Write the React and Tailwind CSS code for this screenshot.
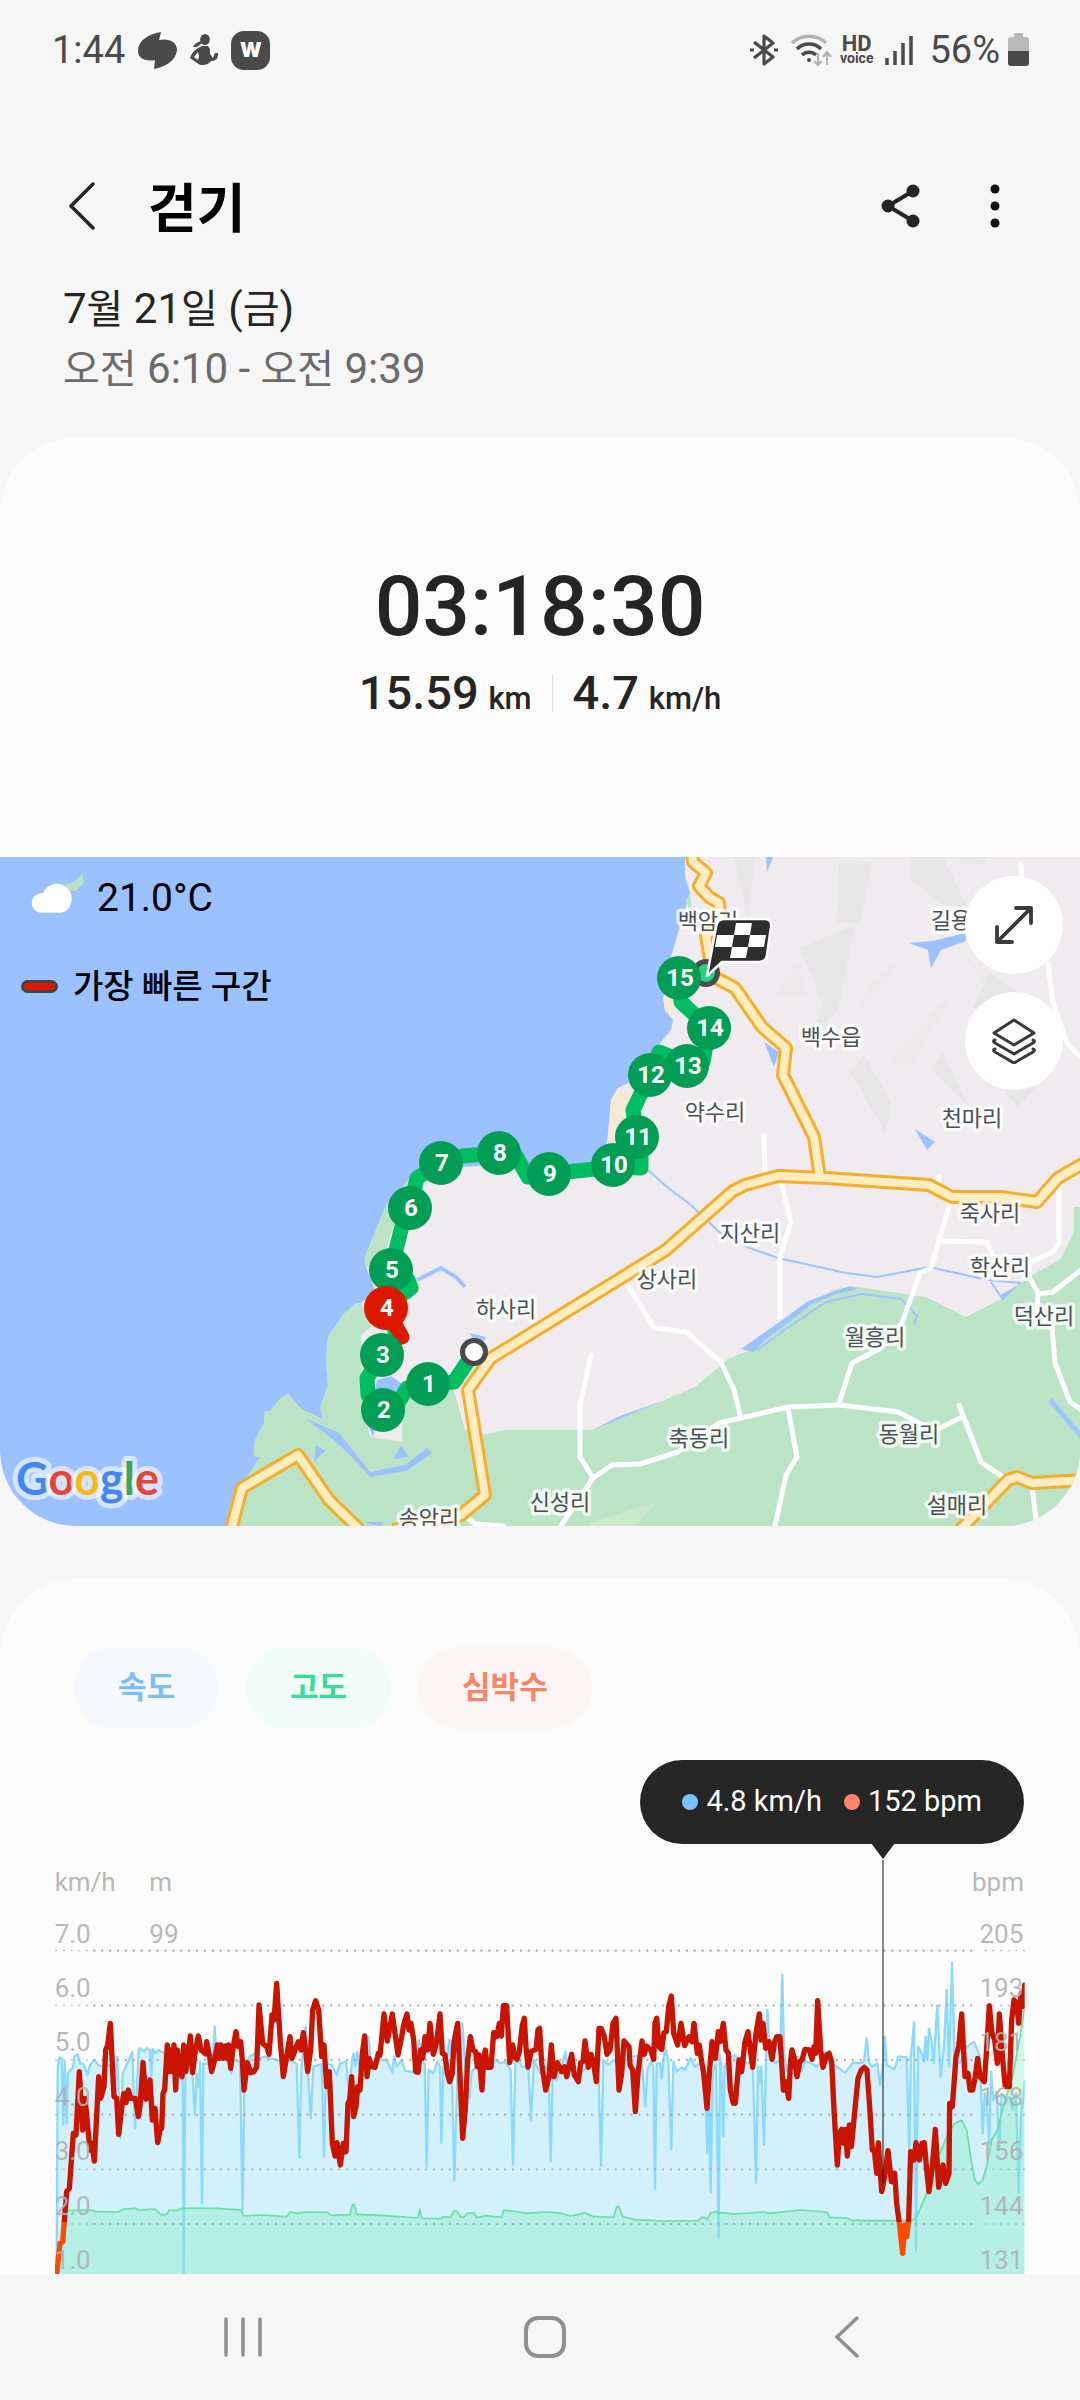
import React from "react";

const LAND =
  "685,857 685,877 690,893 678,933 671,957 668,985 663,997 665,1010 673,1020 671,1030 654,1050 640,1067 628,1083 618,1088 611,1100 607,1143 592,1163 549,1174 528,1183 516,1163 463,1167 427,1180 410,1178 387,1203 365,1257 366,1267 375,1290 361,1303 355,1304 343,1315 328,1337 326,1363 328,1385 320,1408 324,1420 300,1408 288,1394 280,1399 270,1411 265,1411 264,1423 255,1440 254,1456 260,1457 247,1477 238,1485 227,1526 1080,1526 1080,857";

const FORESTS = [
  "361,1303 355,1304 343,1315 328,1337 326,1363 328,1385 320,1408 324,1420 300,1408 288,1394 280,1399 270,1411 265,1411 264,1423 255,1440 254,1456 260,1457 247,1477 238,1485 227,1526 1080,1526 1080,1207 1074,1207 1074,1232 1060,1260 1032,1275 1003,1298 966,1317 926,1297 857,1287 836,1289 808,1303 781,1323 755,1348 728,1359 719,1367 695,1387 660,1402 592,1430 506,1430 482,1435 465,1430 452,1384 425,1370 403,1400 402,1442 370,1437 366,1420 361,1385 361,1335 372,1326",
  "410,1178 387,1203 365,1257 366,1267 380,1267 394,1225",
  "82,874 84,883 75,891 65,890 60,886 74,882",
  "690,893 692,910 689,912 686,900",
];

const HILLS = [
  "734,857 755,857 748,917",
  "839,863 872,862 860,923 836,923",
  "910,857 943,857 967,907 943,905 910,880",
  "950,857 988,857 982,865",
  "855,925 838,1010 815,1032 822,1003 800,948",
  "864,1054 891,1103 886,1133 850,1072",
  "943,1052 969,1107 931,1068",
  "989,973 1019,992 972,1010",
  "1003,1090 1036,1087 1018,1107",
];

const LIGHT_HILLS = [
  "955,988 915,1063 888,1063",
  "798,962 808,997 772,998",
  "910,953 855,1015 870,983",
  "965,955 989,973 982,985",
];

const PONDS = [
  "909,943 933,941 965,933 966,941 941,950 931,968 928,950",
  "915,1129 935,1142 927,1150",
  "764,1042 779,1052 774,1067",
  "766,857 773,857 767,872",
  "469,1333 486,1337 480,1347",
  "377,1380 391,1376 401,1383 397,1393 374,1397",
  "368,1425 376,1425 373,1437",
  "305,1418 339,1433 370,1472 405,1465 427,1448 432,1453 406,1471 370,1477 348,1453 330,1437",
  "316,1445 325,1451 314,1462",
  "401,1445 409,1457 394,1459",
  "363,1522 384,1522 380,1526",
  "741,1349 781,1321 808,1301 850,1286 858,1289 836,1294 812,1304 785,1325 764,1341 754,1352",
  "592,1430 620,1416 662,1401 622,1418",
  "1003,1300 1001,1295 1021,1283",
];

const STREAMS = [
  "648,1170 667,1187 691,1205 719,1232 747,1247 778,1258 846,1273 877,1277 929,1267 988,1280 1021,1283",
  "991,1282 1003,1300",
  "757,1350 790,1326 826,1302 862,1294 901,1299 917,1316 914,1325",
];

const PRIMARY_ROADS = [
  "692,852 693,862 706,873 699,886 709,897 719,903 721,925 706,935 712,972 716,978 735,988 762,1027 786,1048 783,1075 814,1137 820,1178",
  "393,1530 461,1515 485,1495 468,1390 491,1358 540,1328 626,1275 666,1250 733,1191 745,1185 778,1176 826,1178 929,1185 952,1197 1001,1197 1037,1202 1058,1178 1084,1163",
  "231,1530 242,1488 298,1455 329,1500 360,1530",
  "960,1530 1008,1480 1017,1477 1032,1483 1084,1480",
];

const ROADS = [
  "764,1135 765,1175",
  "781,1180 783,1190 791,1222 780,1257 780,1317",
  "626,1282 654,1328 686,1332 721,1362 734,1390 741,1418",
  "561,1526 593,1478 580,1457 580,1405 591,1355",
  "593,1478 612,1465 640,1464 678,1452 719,1423 741,1418 788,1407 840,1405 898,1412 919,1423 936,1430 960,1418",
  "775,1526 786,1475 797,1457 788,1408",
  "839,1403 852,1363 881,1348 902,1323 920,1273 931,1268 950,1203",
  "939,1241 986,1242 994,1257",
  "1059,1188 1059,1242 1053,1252 1029,1263 1029,1277 1038,1293 1037,1310 1052,1328 1055,1363 1070,1402 1082,1410",
  "1038,1294 1053,1292 1082,1269",
  "959,1405 981,1462 1003,1477",
  "1032,1485 1036,1520",
  "1048,963 1053,1003 1067,1043 1082,1059",
  "1021,865 1022,877",
  "939,1177 938,1188",
  "948,1188 956,1193",
  "468,1518 475,1524 504,1526",
  "329,1498 338,1502",
];

const PLACES = [
  ["백암리", 708, 921],
  ["길용리", 961, 920],
  ["백수읍", 831, 1037],
  ["약수리", 715, 1112],
  ["천마리", 972, 1118],
  ["죽사리", 990, 1213],
  ["지산리", 750, 1233],
  ["학산리", 1000, 1267],
  ["상사리", 667, 1279],
  ["하사리", 506, 1309],
  ["덕산리", 1044, 1316],
  ["월흥리", 875, 1337],
  ["축동리", 699, 1438],
  ["동월리", 909, 1434],
  ["신성리", 560, 1502],
  ["설매리", 957, 1505],
  ["송암리", 429, 1518],
];

const ROUTE =
  "474,1352 454,1382 428,1384 407,1388 400,1400 383,1410 368,1395 367,1378 382,1355 398,1338 386,1308 395,1300 411,1288 408,1280 391,1270 403,1222 410,1208 417,1178 441,1163 462,1156 499,1153 516,1156 528,1177 549,1174 613,1167 641,1168 641,1152 637,1137 633,1110 650,1075 659,1052 669,1056 687,1066 703,1062 709,1028 681,1002 679,978 705,973";

const KM_MARKERS = [
  [1, 428, 1384],
  [2, 383, 1410],
  [3, 382, 1355],
  [5, 391, 1270],
  [4, 386, 1308],
  [6, 410, 1208],
  [7, 441, 1163],
  [8, 499, 1153],
  [9, 549, 1174],
  [10, 613, 1165],
  [11, 637, 1137],
  [13, 687, 1066],
  [12, 650, 1075],
  [14, 709, 1028],
  [15, 679, 978],
];

// chart units: three per pixel on a 1080px wide screen
const HEART =
  "170,1242 180,1150 188,1145 200,995 208,985 220,820 228,825 238,635 248,810 255,715 270,870 275,850 283,903 296,650 302,715 312,680 317,570 323,555 331,490 342,710 350,715 356,823 368,720 372,700 378,728 385,690 392,715 406,715 415,770 420,740 429,608 438,718 450,660 457,780 465,745 473,848 480,810 485,805 489,700 494,690 502,555 508,635 513,570 516,635 522,555 527,690 532,570 540,640 546,650 551,555 557,635 565,580 571,528 578,638 586,570 595,528 603,570 617,582 620,545 628,585 635,635 644,600 652,555 658,595 663,555 670,595 676,558 682,595 686,555 692,625 700,560 708,515 715,560 722,545 727,600 732,690 742,608 752,638 761,635 770,622 777,435 788,550 800,560 807,583 816,465 822,480 830,370 841,545 850,650 860,590 870,530 876,595 885,570 895,545 903,570 910,518 917,570 923,635 932,570 938,450 947,422 956,450 965,590 972,555 980,680 988,635 997,850 1005,888 1011,848 1021,915 1030,850 1038,875 1044,730 1049,720 1055,650 1061,770 1068,740 1073,680 1080,690 1087,580 1094,528 1101,650 1107,595 1115,620 1125,622 1135,580 " +
  "1140,585 1152,462 1162,543 1177,462 1194,585 1205,530 1212,490 1221,462 1227,510 1233,490 1241,540 1247,635 1254,637 1262,570 1268,595 1275,530 1283,570 1290,490 1300,583 1310,545 1320,462 1327,580 1335,585 1342,640 1349,665 1357,640 1362,545 1373,490 1380,650 1388,835 1396,745 1403,600 1411,530 1419,570 1427,575 1432,620 1437,585 1446,690 1451,595 1456,570 1462,622 1473,622 1481,518 1490,530 1498,490 1504,528 1510,437 1520,437 1529,608 1538,555 1544,590 1551,598 1558,575 1567,495 1573,475 1578,560 1584,622 1593,575 1608,568 1614,510 1619,505 1625,610 1637,690 1647,650 1654,555 1662,650 1672,608 1685,635 1693,620 1700,650 1710,605 1715,583 1723,645 1735,665 1742,608 1749,605 1755,543 1765,622 1773,583 1781,610 1789,665 1797,505 1804,505 1813,530 1821,583 1830,570 1839,490 1848,475 1857,690 1865,640 1872,543 1887,560 1890,615 1898,630 1906,755 1914,640 1926,543 1933,583 1939,558 1952,570 1961,598 1965,490 1970,475 1977,560 1985,568 1992,518 1999,515 2006,440 2014,408 2021,520 2033,555 2043,490 2054,557 2067,530 2076,545 2082,490 2092,580 2098,555 2105,605 2111,640 2121,745 2128,640 2136,545 2146,595 2155,515 " +
  "2160,545 2170,490 2178,570 2185,580 2191,690 2200,730 2206,730 2217,600 2225,635 2235,545 2244,515 2258,622 2268,520 2278,462 2283,540 2289,490 2297,565 2307,545 2316,598 2324,545 2330,530 2340,530 2350,690 2357,665 2366,715 2372,600 2376,570 2383,595 2391,650 2400,605 2406,600 2415,568 2428,570 2436,598 2442,560 2447,580 2453,422 2462,570 2469,622 2480,585 2487,580 2495,605 2502,750 2512,915 2518,820 2525,808 2531,850 2536,808 2542,888 2548,795 2554,860 2560,800 2567,725 2574,655 2584,630 2593,622 2601,630 2609,740 2617,870 2623,870 2630,940 2635,848 2645,995 2652,960 2664,872 2674,965 2684,940 2690,1030 2698,1090 2708,1180 2714,1095 2720,1130 2726,1080 2732,875 2742,900 2748,848 2758,900 2766,850 2773,848 2780,930 2787,995 2797,920 2806,808 2816,982 2829,915 2837,970 2847,940 2849,730 2857,740 2868,590 2876,560 2885,462 2895,650 2904,640 2910,690 2918,690 2925,655 2933,595 2940,650 2953,665 2959,580 2968,437 2976,520 2984,540 2992,610 2998,462 3008,600 3016,680 3028,680 3035,480 3042,420 3050,430 3056,490 3063,400 3068,440 3074,375";

const SPEED =
  "170,1242 173,620 178,592 185,595 190,795 194,605 200,790 204,640 220,620 223,590 233,583 240,610 250,612 262,645 270,615 283,600 295,615 312,620 332,615 342,700 352,590 361,835 368,640 382,610 397,577 405,805 416,570 420,565 432,575 440,565 450,570 454,650 458,567 466,580 475,570 495,580 515,620 540,600 548,620 551,1250 556,640 575,610 585,765 590,640 596,680 600,605 606,1030 610,610 625,612 638,600 644,500 650,600 675,580 694,640 700,600 720,605 728,1050 734,610 750,590 765,580 775,595 795,590 820,597 840,603 870,600 890,612 898,893 904,630 917,500 923,620 932,775 940,620 965,612 972,888 978,610 995,615 1010,645 1020,610 1038,605 1048,700 1056,600 1061,580 1065,620 1072,575 1080,640 1095,600 1105,530 1112,600 1125,610 1140,590 " +
  "1145,600 1160,600 1177,637 1182,590 1190,620 1205,600 1215,632 1240,637 1256,540 1262,560 1268,605 1274,610 1280,920 1286,630 1300,640 1312,605 1320,620 1324,848 1330,620 1340,600 1348,540 1355,610 1363,960 1372,640 1380,610 1387,490 1396,620 1408,715 1415,635 1430,620 1450,605 1475,620 1488,600 1500,610 1515,605 1532,630 1539,915 1546,610 1558,600 1565,620 1585,620 1593,780 1602,600 1620,640 1635,620 1646,630 1652,905 1658,640 1670,660 1685,620 1696,575 1703,620 1720,640 1740,640 1765,620 1795,610 1803,918 1810,600 1825,615 1840,600 1865,610 1890,590 1915,588 1925,600 1936,740 1942,630 1955,600 1960,620 1965,987 1970,610 1980,610 1985,655 1995,560 2005,605 2014,868 2020,605 2030,635 2045,622 2055,630 2072,595 2085,620 2100,610 2115,620 2122,880 2127,640 2132,997 2138,640 2148,610 2156,1135 " +
  "2160,585 2164,620 2170,830 2174,620 2182,605 2202,585 2220,600 2245,610 2258,600 2268,968 2274,620 2278,670 2284,620 2292,855 2298,600 2302,450 2310,590 2325,610 2340,600 2347,345 2352,580 2365,650 2375,600 2395,590 2405,635 2415,605 2435,610 2450,620 2470,600 2510,620 2535,638 2560,607 2580,610 2592,605 2600,535 2608,610 2615,620 2632,610 2640,675 2648,620 2654,530 2660,615 2683,628 2695,590 2720,592 2728,880 2732,600 2742,487 2748,1172 2754,560 2765,580 2772,605 2777,530 2782,600 2787,507 2795,545 2801,610 2812,437 2822,650 2832,560 2840,390 2847,620 2856,308 2864,600 2880,610 2900,560 2922,545 2940,590 2948,820 2954,700 2960,720 2968,850 2973,635 2980,720 2990,695 2998,870 3005,700 3020,720 3030,710 3038,750 3048,700 3056,1000 3063,760 3070,720 3074,660";

const ALTITUDE =
  "170,1242 195,1052 275,1050 285,1055 355,1056 370,1048 405,1045 415,1050 465,1047 482,1064 500,1064 507,1050 530,1052 545,1045 600,1044 650,1045 723,1050 730,1068 785,1065 860,1070 870,1056 895,1060 920,1056 982,1057 995,1066 1050,1064 1057,1034 1063,1034 1070,1063 1140,1066 1200,1070 1253,1074 1260,1047 1265,1075 1323,1076 1330,1070 1352,1072 1362,1052 1370,1053 1382,1070 1392,1072 1402,1060 1423,1059 1430,1073 1458,1067 1505,1072 1511,1050 1555,1056 1575,1060 1640,1056 1685,1060 1710,1068 1735,1064 1755,1058 1780,1070 1840,1072 1850,1040 1857,1040 1868,1070 1905,1079 1990,1083 2095,1082 2105,1072 2115,1072 2121,1080 2130,1060 2145,1055 2160,1058 2205,1062 2290,1056 2310,1060 2400,1050 2480,1056 2490,1072 2540,1074 2558,1082 2575,1080 2580,1082 2735,1082 2750,1070 2780,1000 2815,890 2845,820 2865,790 2885,780 2900,810 2915,910 2925,960 2935,973 2948,960 2960,920 2975,840 2992,810 3010,740 3040,640 3060,530 3074,440";

const SCALE = [
  { speed: "7.0", bpm: "205", y: 248 },
  { speed: "6.0", bpm: "193", y: 410 },
  { speed: "5.0", bpm: "181", y: 573 },
  { speed: "4.0", bpm: "168", y: 737 },
  { speed: "3.0", bpm: "156", y: 900 },
  { speed: "2.0", bpm: "144", y: 1065 },
  { speed: "1.0", bpm: "131", y: 1227 },
];

function StatusBar() {
  return (
    <div className="flex h-[100px] items-center justify-between pl-[52px] pr-[51px] text-[38px] text-[#4a4a4a]">
      <div className="flex items-center gap-[13px]">
        <span className="leading-none">1:44</span>
        <svg className="h-[37px] w-[39px]" viewBox="0 0 39 37" fill="#4a4a4a">
          <path d="M23 0 21 8C31 6 39 10 39 18C38 28 28 35 16 37L17 28C7 30 0 26 0 19C0 9 10 2 23 0Z" />
        </svg>
        <svg className="h-8 w-7" viewBox="0 0 28 32" fill="#4a4a4a">
          <ellipse cx="15" cy="5.500" rx="4.800" ry="5.500" />
          <path d="M11 7C8 8 4 10 3 13L7 13 12 9ZM12 12H18L20 15 20 20 23 24 25 19 28 19C28 25 26 27 21 27C18 32 10 32 7 29L0 24C1 20 6 14 12 12ZM8 18 4 23 8 26 9 22Z" />
        </svg>
        <span className="flex h-[39px] w-[39px] items-center justify-center rounded-[13px] bg-[#4a4a4a] font-['Inter'] text-[20px] font-black leading-none text-white">
          W
        </span>
      </div>
      <div className="flex items-center">
        <svg className="h-[34px] w-7" viewBox="0 0 28 34" fill="none" stroke="#4a4a4a" strokeWidth="3.200">
          <path d="M4 9 23 24 14 31V3L23 10 4 25" strokeLinejoin="round" />
          <path d="M0 17H4M24 17H28" />
        </svg>
        <svg className="ml-[13px] h-[34px] w-[42px]" viewBox="0 0 42 34" fill="none" strokeWidth="3.500">
          <path d="M1 10A25 25 0 0 1 35 10" stroke="#b3b3b3" />
          <path d="M6 16A17 17 0 0 1 30 16M11 22A10 10 0 0 1 25 22" stroke="#4a4a4a" />
          <circle cx="18" cy="27" r="2" fill="#4a4a4a" stroke="none" />
          <path d="M27 20V32M23 28 27 32 31 28M36 32V20M32 24 36 19 40 24" stroke="#b3b3b3" strokeWidth="2.200" />
        </svg>
        <div className="ml-[7px] flex flex-col items-center font-bold">
          <span className="text-[22px] leading-[17px]">HD</span>
          <span className="text-[14px] leading-[13px]">voice</span>
        </div>
        <svg className="ml-[12px] h-[30px] w-7" viewBox="0 0 28 30" stroke="#4a4a4a" strokeWidth="3.500">
          <path d="M2 23V30M10 16V30M18 8V30M26 1V30" />
        </svg>
        <span className="ml-4 leading-none">56%</span>
        <svg className="ml-2 h-[34px] w-[21px]" viewBox="0 0 21 34">
          <path d="M6 4V1Q6 0 7 0H14Q15 0 15 1V4H18Q21 4 21 7V18H0V7Q0 4 3 4Z" fill="#b9b9b9" />
          <path d="M0 18H21V30Q21 33 18 33H3Q0 33 0 30Z" fill="#4a4a4a" />
        </svg>
      </div>
    </div>
  );
}

function Header() {
  return (
    <header>
      <div className="mt-[66px] flex h-20 items-center pl-[68px] pr-[75px]">
        <button aria-label="뒤로">
          <svg className="h-12 w-7" viewBox="0 0 28 48" fill="none" stroke="#252525" strokeWidth="3.500" strokeLinecap="round" strokeLinejoin="round">
            <path d="M25 2 3 24 25 46" />
          </svg>
        </button>
        <h1 className="ml-[52px] pt-2 text-[53px] font-bold leading-none text-black">걷기</h1>
        <button className="ml-auto" aria-label="공유">
          <svg className="h-11 w-10" viewBox="0 0 40 44" fill="#252525">
            <path d="M32 7 7 22 32 37" fill="none" stroke="#252525" strokeWidth="4" />
            <circle cx="32" cy="7" r="6.500" />
            <circle cx="7" cy="22" r="6.500" />
            <circle cx="32" cy="37" r="6.500" />
          </svg>
        </button>
        <button className="ml-[64px]" aria-label="더보기">
          <svg className="h-11 w-5" viewBox="0 0 20 44" fill="#111">
            <circle cx="10" cy="5" r="4.500" />
            <circle cx="10" cy="22" r="4.500" />
            <circle cx="10" cy="39" r="4.500" />
          </svg>
        </button>
      </div>
      <div className="mt-[33px] px-[63px] text-[42px] leading-[60px]">
        <p className="text-[#252525]">
          7<span className="text-[40px] leading-none">월</span> 21<span className="text-[40px] leading-none">일</span> (
          <span className="text-[40px] leading-none">금</span>)
        </p>
        <p className="text-[#6b6b6b]">
          <span className="text-[40px] leading-none">오전</span> 6:10 - <span className="text-[40px] leading-none">오전</span> 9:39
        </p>
      </div>
    </header>
  );
}

function RouteMap() {
  return (
    <div className="relative">
      <svg className="block w-full" viewBox="0 857 1080 669" role="img" aria-label="경로 지도">
        <rect y="857" width="1080" height="669" fill="#9bc1ff" />
        <polygon points={LAND} fill="#efebee" />
        {HILLS.map((p) => (
          <polygon key={p} points={p} fill="#e6e6e6" />
        ))}
        {LIGHT_HILLS.map((p) => (
          <polygon key={p} points={p} fill="#ebe9ea" />
        ))}
        {FORESTS.map((p) => (
          <polygon key={p} points={p} fill="#bbe3c6" />
        ))}
        <polygon points="657,1502 635,1526 590,1526 590,1523" fill="#cbe9c9" />
        <polygon points="618,1088 611,1100 607,1150 625,1143 634,1098" fill="#f6ead6" />
        <polygon points="663,997 665,1010 672,1019 679,1002" fill="#f6ead6" />
        {PONDS.map((p) => (
          <polygon key={p} points={p} fill="#9bc1ff" />
        ))}
        <g fill="none" stroke="#a0c4ff" strokeWidth="2">
          {STREAMS.map((p) => (
            <polyline key={p} points={p} />
          ))}
          <path d="M417 1280 441 1268 456 1277 465 1287" strokeWidth="4" />
          <path d="M1050 1400 1082 1437" strokeWidth="5" />
        </g>
        <g fill="none" stroke="#fff" strokeWidth="5" strokeLinejoin="round" strokeLinecap="round">
          {ROADS.map((p) => (
            <polyline key={p} points={p} />
          ))}
        </g>
        <g fill="none" stroke="#f6ae29" strokeWidth="14" strokeLinejoin="round">
          {PRIMARY_ROADS.map((p) => (
            <polyline key={p} points={p} />
          ))}
        </g>
        <g fill="none" stroke="#feecc2" strokeWidth="8" strokeLinejoin="round">
          {PRIMARY_ROADS.map((p) => (
            <polyline key={p} points={p} />
          ))}
        </g>
        <g fontSize="22" fill="#4b5058" textAnchor="middle" stroke="#fff" strokeOpacity="0.75" strokeWidth="7" strokeLinejoin="round" paintOrder="stroke">
          {PLACES.map(([name, x, y]) => (
            <text key={name} x={x} y={y + 8}>
              {name}
            </text>
          ))}
        </g>

        <polyline points={ROUTE} fill="none" stroke="#00bd62" strokeWidth="15" strokeLinejoin="round" />
        <path d="M386 1308 402 1337" stroke="#dc1900" strokeWidth="15" strokeLinecap="round" />
        <circle cx="474" cy="1352" r="11.500" fill="#fff" stroke="#4a4a4a" strokeWidth="5" />
        <circle cx="706" cy="973" r="11.500" fill="#2bd07c" stroke="#4a4a4a" strokeWidth="5" />
        {KM_MARKERS.map(([km, x, y]) => (
          <g key={km}>
            <circle cx={x} cy={y} r="22" fill={km === 4 ? "#dc1900" : "#009d55"} />
            <text x={x + 1} y={y + 8} fontSize="24" fontWeight="700" fill="#fff" textAnchor="middle">
              {km}
            </text>
          </g>
        ))}
        <path
          d="M724 919H765Q772 919 771 927L767 955Q766 962 759 962H722L707 976 716 927Q717 919 724 919Z"
          fill="#2e2e2e"
          stroke="#fff"
          strokeWidth="2.500"
          strokeLinejoin="round"
        />
        <path d="M736 923H752L750 935H734ZM717 935H734L732 947H715ZM750 935H766L764 947H748ZM732 947H748L746 958H730Z" fill="#fff" />
        <g fontFamily="Lato" fontSize="45" stroke="#fff" strokeOpacity="0.6" strokeWidth="10" strokeLinejoin="round" paintOrder="stroke">
          <text x="16" y="1495" fontWeight="700">
            <tspan fill="#4485f4">G</tspan>
            <tspan fill="#e54439">o</tspan>
            <tspan fill="#f7ba13">o</tspan>
            <tspan fill="#4485f4">g</tspan>
            <tspan fill="#3aa757">l</tspan>
            <tspan fill="#e54439">e</tspan>
          </text>
        </g>
      </svg>

      <div className="absolute left-[21px] top-4 text-black">
        <div className="flex h-[50px] items-center pl-2 text-[39px] leading-none">
          <svg className="h-8 w-[46px]" viewBox="0 0 46 32" fill="#fff">
            <path d="M11 31A10 10 0 1 1 14 11A15 15 0 0 1 43 16C43 25 38 31 31 31Z" stroke="#8fb2ee" strokeOpacity="0.5" />
          </svg>
          <span className="ml-[22px]">21.0°C</span>
        </div>
        <div className="mt-[38px] flex h-[50px] items-center text-[33px] font-medium leading-none">
          <span className="h-[13px] w-[37px] rounded-full border-[3px] border-[#444] bg-[#dc1900]" />
          <span className="ml-[15px]">가장 빠른 구간</span>
        </div>
      </div>

      <div className="absolute right-[17px] top-[19px] flex flex-col gap-[18px]">
        <button className="flex h-[98px] w-[98px] items-center justify-center rounded-full bg-white" aria-label="확대">
          <svg className="h-10 w-10" viewBox="0 0 40 40" fill="none" stroke="#3a3a3a" strokeWidth="3.800" strokeLinecap="round" strokeLinejoin="round">
            <path d="M3 37 37 3M22 3H37V18M3 22V37H18" />
          </svg>
        </button>
        <button className="flex h-[98px] w-[98px] items-center justify-center rounded-full bg-white" aria-label="지도 유형">
          <svg className="h-[46px] w-[46px]" viewBox="0 0 46 46" fill="none" stroke="#3a3a3a" strokeWidth="3" strokeLinejoin="round" strokeLinecap="round">
            <path d="M23 2 43 15 23 27 3 15Z" />
            <path d="M4 22Q1 23 4 25L23 36 42 25Q45 23 42 22M4 31Q1 32 4 34L23 45 42 34Q45 32 42 31" />
          </svg>
        </button>
      </div>
    </div>
  );
}

function WorkoutChart() {
  return (
    <div className="relative mt-[131px]">
      <svg className="block w-full" viewBox="0 0 3240 1242" role="img" aria-label="속도, 고도, 심박수 그래프">
        <defs>
          <linearGradient id="zone" gradientUnits="userSpaceOnUse" x1="0" y1="0" x2="0" y2="1242">
            <stop offset="0.874" stopColor="#c91400" />
            <stop offset="0.874" stopColor="#ff4a00" />
          </linearGradient>
          <clipPath id="plot">
            <rect x="165" y="0" width="2909" height="1242" />
          </clipPath>
        </defs>
        <g clipPath="url(#plot)">
          <polygon points={`${SPEED} 3074,1242`} fill="#d3f0fd" />
          <polyline points={SPEED} fill="none" stroke="#8bdafd" strokeWidth="7" strokeLinejoin="round" />
          <polygon points={`${ALTITUDE} 3074,1242`} fill="#6ff0b0" fillOpacity="0.3" />
          <polyline points={ALTITUDE.replace("170,1242 ", "")} fill="none" stroke="#66e0a3" strokeWidth="5" strokeLinejoin="round" />
        </g>
        {[272, 436, 600, 764, 928, 1092].map((y) => (
          <g key={y} stroke="#a9aeb0" strokeLinecap="round">
            <path d={`M167 ${y}H270M2955 ${y}H3074`} strokeWidth="3" strokeDasharray="4 19" />
            <path d={`M283 ${y}H2935`} strokeWidth="7" strokeDasharray="0 23.700" />
          </g>
        ))}
        <g clipPath="url(#plot)">
          <polyline points={HEART} fill="none" stroke="url(#zone)" strokeWidth="16" strokeLinejoin="round" strokeLinecap="round" />
        </g>
        <path d="M2649 0V970" stroke="#222" strokeOpacity="0.8" strokeWidth="4" />
        <g fontSize="78" fill="#b0b2b2" fillOpacity="0.92">
          <text x="164" y="93">km/h</text>
          <text x="448" y="93">m</text>
          <text x="3072" y="93" textAnchor="end">bpm</text>
          <text x="448" y="248">99</text>
          {SCALE.map((row) => (
            <g key={row.y}>
              <text x="164" y={row.y}>{row.speed}</text>
              <text x="3070" y={row.y} textAnchor="end">{row.bpm}</text>
            </g>
          ))}
        </g>
      </svg>

      <div className="absolute right-[56px] top-[-100px] flex h-[84px] items-center rounded-full bg-[#262626] px-[42px] text-[29px] text-white">
        <span className="h-4 w-4 rounded-full bg-[#79c1ff]" />
        <span className="ml-2">4.8 km/h</span>
        <span className="ml-[22px] h-4 w-4 rounded-full bg-[#ff846c]" />
        <span className="ml-2">152 bpm</span>
        <svg className="absolute right-[129px] top-[83px] h-4 w-6" viewBox="0 0 24 16" fill="#262626">
          <path d="M0 0H24L12 16Z" />
        </svg>
      </div>
    </div>
  );
}

function NavBar() {
  return (
    <nav className="flex h-[126px] items-center bg-[#f6f6f6] pl-[92px] pr-[82px]">
      <button className="flex flex-1 justify-center" aria-label="최근 앱">
        <svg className="h-[42px] w-[42px]" viewBox="0 0 42 42" stroke="#909090" strokeWidth="3.500" strokeLinecap="round">
          <path d="M4 3V39M21 3V39M38 3V39" />
        </svg>
      </button>
      <button className="flex flex-1 justify-center" aria-label="홈">
        <svg className="h-[42px] w-[42px]" viewBox="0 0 42 42" fill="none" stroke="#909090" strokeWidth="4">
          <rect x="2" y="2" width="38" height="38" rx="12" />
        </svg>
      </button>
      <button className="flex flex-1 justify-center" aria-label="뒤로 가기">
        <svg className="h-[42px] w-6" viewBox="0 0 24 42" fill="none" stroke="#909090" strokeWidth="3.500" strokeLinecap="round">
          <path d="M22 2 2 21 22 40" />
        </svg>
      </button>
    </nav>
  );
}

export default function App() {
  return (
    <div className="bg-[#f6f6f6] font-['Roboto','Noto_Sans_CJK_KR',sans-serif]">
      <StatusBar />
      <Header />
      <main>
        <section className="mt-[39px] overflow-hidden rounded-[76px] bg-[#fcfcfc] text-[#252525]">
          <p className="pt-[119px] text-center text-[84px] font-medium leading-[100px]">03:18:30</p>
          <div className="mb-[136px] mt-2 flex h-14 items-center justify-center font-medium">
            <p className="text-[47px]">
              15.59 <span className="-ml-0.5 text-[31px]">km</span>
            </p>
            <span className="mx-5 h-[38px] w-px bg-[#e2e2e2]" />
            <p className="text-[47px]">
              4.7 <span className="-ml-0.5 text-[31px]">km/h</span>
            </p>
          </div>
          <RouteMap />
        </section>
        <section className="mt-[53px] rounded-t-[76px] bg-[#fcfcfc] pt-[68px]">
          <div className="flex h-[82px] gap-[27px] pl-[74px] text-[31px] font-bold">
            <button className="rounded-full bg-[#f5f9fd] px-11 text-[#79bff9]">속도</button>
            <button className="rounded-full bg-[#f2fcf9] px-11 text-[#3bdc97]">고도</button>
            <button className="rounded-full bg-[#fbf5f5] px-11 text-[#f98468]">심박수</button>
          </div>
          <WorkoutChart />
        </section>
      </main>
      <NavBar />
    </div>
  );
}
